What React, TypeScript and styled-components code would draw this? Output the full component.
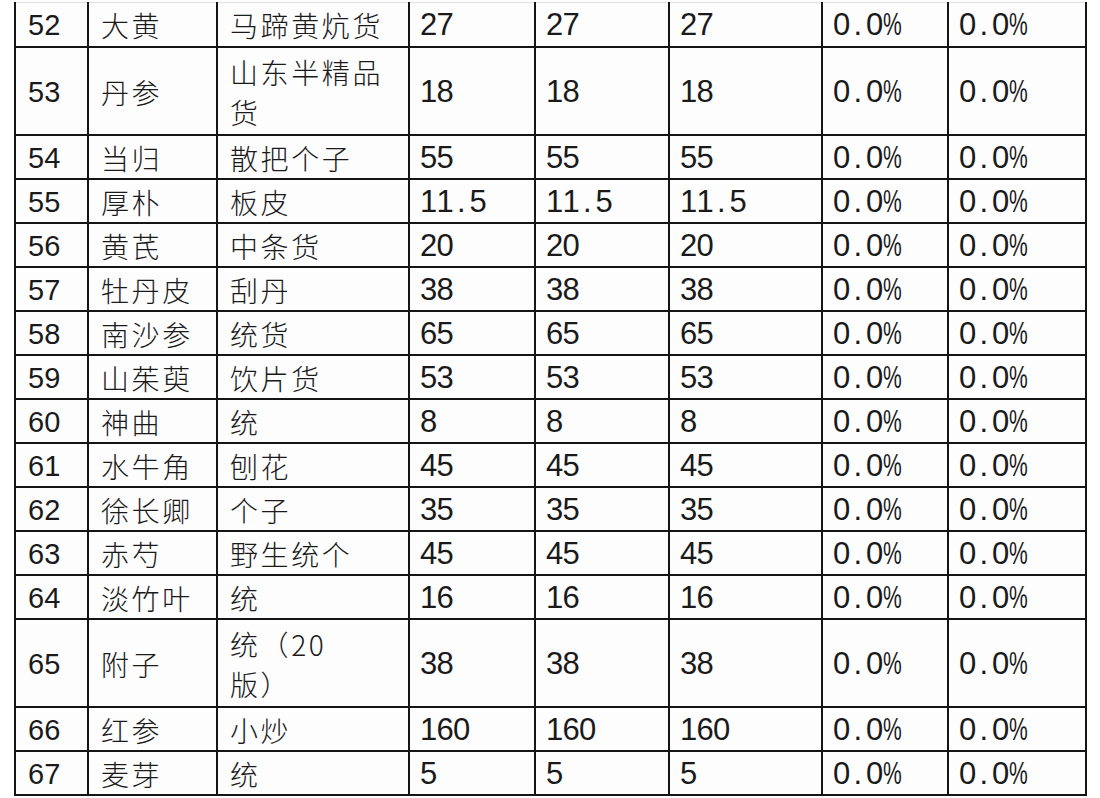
import React from 'react';
import styled, { createGlobalStyle } from 'styled-components';

type CellKind = 'no' | 'cn' | 'num';

type RowObjType = {
  no: string;
  name: string;
  spec: string;
  price: string;
  tall?: boolean;
};

const rows: RowObjType[] = [
  { no: '52', name: '大黄', spec: '马蹄黄炕货', price: '27' },
  { no: '53', name: '丹参', spec: '山东半精品\n货', price: '18', tall: true },
  { no: '54', name: '当归', spec: '散把个子', price: '55' },
  { no: '55', name: '厚朴', spec: '板皮', price: '11.5' },
  { no: '56', name: '黄芪', spec: '中条货', price: '20' },
  { no: '57', name: '牡丹皮', spec: '刮丹', price: '38' },
  { no: '58', name: '南沙参', spec: '统货', price: '65' },
  { no: '59', name: '山茱萸', spec: '饮片货', price: '53' },
  { no: '60', name: '神曲', spec: '统', price: '8' },
  { no: '61', name: '水牛角', spec: '刨花', price: '45' },
  { no: '62', name: '徐长卿', spec: '个子', price: '35' },
  { no: '63', name: '赤芍', spec: '野生统个', price: '45' },
  { no: '64', name: '淡竹叶', spec: '统', price: '16' },
  { no: '65', name: '附子', spec: '统（20\n版）', price: '38', tall: true },
  { no: '66', name: '红参', spec: '小炒', price: '160' },
  { no: '67', name: '麦芽', spec: '统', price: '5' },
];

const colWidths = [73, 129, 192, 126, 134, 153, 126, 138];

const GlobalStyle = createGlobalStyle`
  html, body {
    margin: 0;
    padding: 0;
    background: #ffffff;
  }
  body {
    width: 1100px;
    height: 798px;
    overflow: hidden;
  }
`;

const Page = styled.div`
  padding: 2px 0 0 14px;
`;

const Table = styled.table`
  border-collapse: collapse;
  table-layout: fixed;
  width: 1073px;
  color: #1a1a1a;
  background: #fdfdfe;
`;

const Row = styled.tr<{ $tall?: boolean }>`
  height: ${(props) => (props.$tall ? 88 : 44)}px;

  &:first-child > td {
    border-top: 1px solid #dedede;
  }
`;

const Cell = styled.td<{ $kind: CellKind }>`
  border: 2px solid #151515;
  padding: 2px 0 0 ${(props) => (props.$kind === 'num' ? 10 : 12)}px;
  vertical-align: middle;
  white-space: pre-line;
  overflow: hidden;
  line-height: 40px;
  ${(props) =>
    props.$kind === 'cn'
      ? `
    font-family: "Noto Sans CJK SC", sans-serif;
    font-size: 28px;
    font-weight: 300;
    letter-spacing: 2.6px;
  `
      : `
    font-family: "Liberation Sans", Arial, sans-serif;
    font-size: ${props.$kind === 'no' ? 29 : 31}px;
  `}
`;

// the sheet used a half-width monospace face, so every character gets its own slot
const Glyph = styled.span<{ $char: string }>`
  display: inline-block;
  width: 16.5px;
  text-align: ${(props) => (props.$char === '.' ? 'center' : 'left')};
  ${(props) =>
    props.$char === '%' &&
    `
    transform: scaleX(0.68);
    transform-origin: left center;
  `}
`;

const MonoText = ({ text }: { text: string }) => (
  <>
    {text.split('').map((ch, i) => (
      <Glyph key={i} $char={ch}>
        {ch}
      </Glyph>
    ))}
  </>
);

const App = () => {
  return (
    <Page>
      <GlobalStyle />
      <Table>
        <colgroup>
          {colWidths.map((w, i) => (
            <col key={i} style={{ width: w }} />
          ))}
        </colgroup>
        <tbody>
          {rows.map((row) => (
            <Row key={row.no} $tall={row.tall}>
              <Cell $kind="no">{row.no}</Cell>
              <Cell $kind="cn">{row.name}</Cell>
              <Cell $kind="cn">{row.spec}</Cell>
              <Cell $kind="num">
                <MonoText text={row.price} />
              </Cell>
              <Cell $kind="num">
                <MonoText text={row.price} />
              </Cell>
              <Cell $kind="num">
                <MonoText text={row.price} />
              </Cell>
              <Cell $kind="num">
                <MonoText text="0.0%" />
              </Cell>
              <Cell $kind="num">
                <MonoText text="0.0%" />
              </Cell>
            </Row>
          ))}
        </tbody>
      </Table>
    </Page>
  );
};

export default App;
